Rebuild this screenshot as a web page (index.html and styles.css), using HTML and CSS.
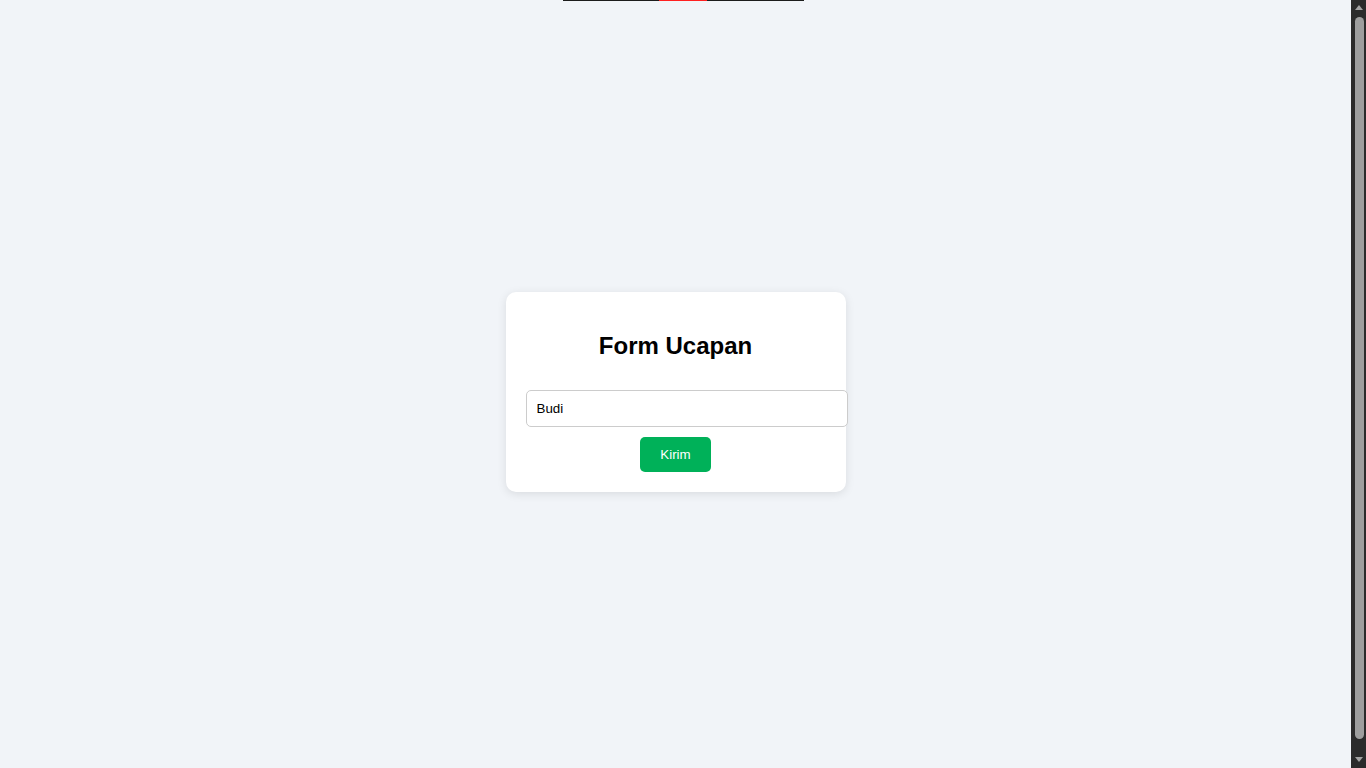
FILE: index.html
```html
<!DOCTYPE html>
<html lang="id">
<head>
<meta charset="utf-8">
<title>Form Ucapan</title>
<link rel="stylesheet" href="styles.css">
</head>
<body>
<div class="topline"><span class="seg-dark"></span><span class="seg-red"></span><span class="seg-dark seg-last"></span></div>
<div class="card">
  <h2 class="title">Form Ucapan</h2>
  <input class="field" type="text" value="Budi">
  <button class="btn" type="button">Kirim</button>
</div>
<div class="scrollbar" aria-hidden="true">
  <span class="arrow arrow-up"></span>
  <span class="thumb"></span>
  <span class="arrow arrow-down"></span>
</div>
</body>
</html>
```

FILE: styles.css
```css
body {
  margin: 8px 23px 8px 8px;
  min-height: 100vh;
  background: #f1f4f8;
  color: #000;
  font-family: "Liberation Sans", Arial, sans-serif;
  display: flex;
  align-items: center;
  justify-content: center;
}
.topline {
  position: absolute;
  top: 0;
  left: 563px;
  width: 241px;
  height: 1px;
  display: flex;
}
.seg-dark {
  flex: 96;
  background: #1c1c1c;
}
.seg-red {
  flex: 48;
  background: #ff2020;
}
.seg-last {
  flex: 97;
}
.card {
  width: 300px;
  padding: 20px;
  background: #fff;
  border-radius: 10px;
  box-shadow: 0 2px 10px rgba(0, 0, 0, 0.1);
  text-align: center;
}
.title {
  font-size: 24px;
  font-weight: bold;
  margin: 20px 0;
  color: #000;
}
.field {
  width: 100%;
  margin: 10px 0;
  padding: 10px;
  border: 1px solid #ccc;
  border-radius: 5px;
  font-family: "Liberation Sans", Arial, sans-serif;
  font-size: 13.333px;
  color: #000;
  background: #fff;
  vertical-align: top;
}
.btn {
  padding: 10px 20px;
  background: #00b159;
  color: #fff;
  border: none;
  border-radius: 5px;
  font-family: "Liberation Sans", Arial, sans-serif;
  font-size: 13.333px;
  font-weight: normal;
  cursor: pointer;
  vertical-align: top;
}
.scrollbar {
  position: fixed;
  top: 0;
  right: 0;
  width: 15px;
  height: 100vh;
  background: #2b2b2b;
  display: flex;
  flex-direction: column;
  align-items: center;
}
.arrow {
  width: 0;
  height: 0;
  border-left: 4px solid transparent;
  border-right: 4px solid transparent;
}
.arrow-up {
  margin-top: 5px;
  border-bottom: 5px solid #a3a3a3;
}
.arrow-down {
  margin-bottom: 6px;
  border-top: 5px solid #a3a3a3;
}
.thumb {
  width: 9px;
  flex: 1;
  margin: 7px 0 18px 2px;
  background: #9e9e9e;
  border-radius: 5px;
}
```
